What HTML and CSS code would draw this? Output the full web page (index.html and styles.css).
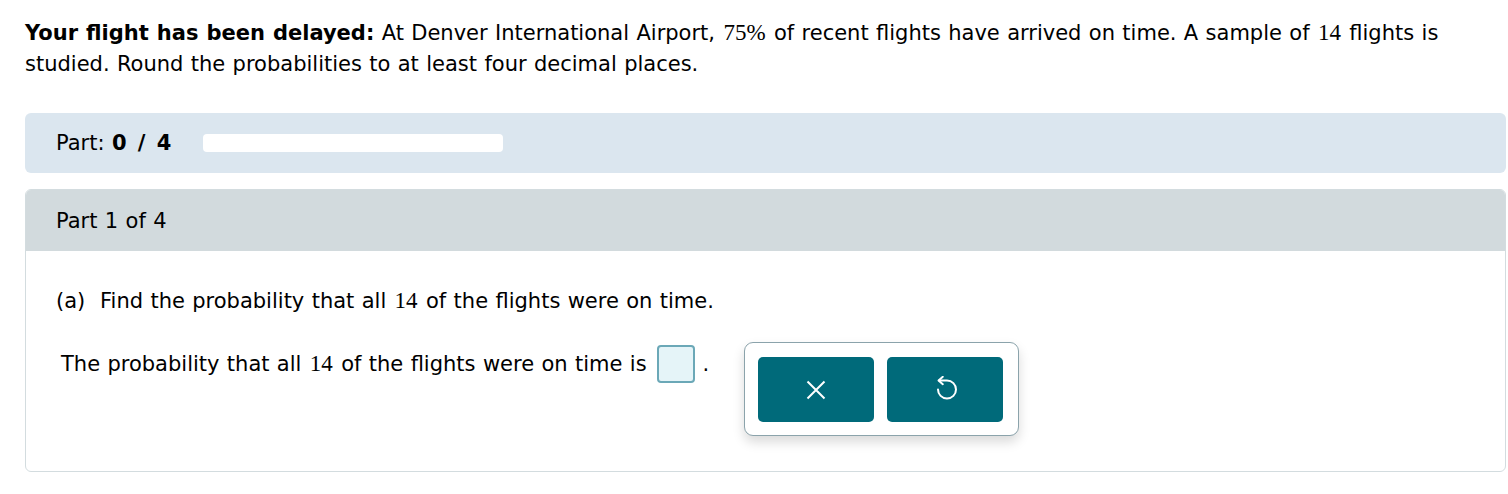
FILE: index.html
```html
<!DOCTYPE html>
<html>
<head>
<meta charset="utf-8">
<link rel="stylesheet" href="styles.css">
</head>
<body>
<div class="page">
  <p class="intro"><b>Your flight has been delayed:</b> At Denver International Airport, <span class="m">75%</span> of recent flights have arrived on time. A sample of <span class="m">14</span> flights is studied. Round the probabilities to at least four decimal places.</p>
  <div class="partbar">
    <span class="plabel">Part: <b class="score">0 / 4</b></span>
    <div class="progress"></div>
  </div>
  <div class="card">
    <div class="card-head">Part 1 of 4</div>
    <div class="card-body">
      <p class="q">(a)&nbsp; Find the probability that all <span class="m">14</span> of the flights were on time.</p>
      <div class="answer-row">
        <p class="ans"><span>The probability that all <span class="m">14</span> of the flights were on time is</span><span class="box"></span><span>.</span></p>
        <div class="tools">
          <button class="btn" aria-label="clear">
            <svg width="20" height="20" viewBox="0 0 20 20"><path d="M1.5 1.5 L18.5 18.5 M18.5 1.5 L1.5 18.5" stroke="#fff" stroke-width="2" fill="none"/></svg>
          </button>
          <button class="btn" aria-label="undo">
            <svg class="undo" width="26" height="26" viewBox="0 0 26 26"><path d="M5 13.5 A9 9 0 1 0 14 4.5 L6 4.5" stroke="#fff" stroke-width="2" fill="none" stroke-linecap="round"/><path d="M9.8 0.8 L5.6 4.5 L9.8 8.2" stroke="#fff" stroke-width="2" fill="none" stroke-linecap="round" stroke-linejoin="round"/></svg>
          </button>
        </div>
      </div>
    </div>
  </div>
</div>
</body>
</html>
```
FILE: styles.css
```css
html, body { margin: 0; padding: 0; background: #fff; }
body { font-family: "DejaVu Sans", Verdana, sans-serif; color: #000; font-size: 21px; word-spacing: 0.7px; }
.page { padding: 17px 2px 0 25px; }
.intro { margin: 0; line-height: 31px; }
.m { font-family: "Liberation Serif", "Times New Roman", serif; font-size: 23px; padding: 0 1px; }
.partbar { margin-top: 33px; height: 60px; background: #dbe6ef; border-radius: 6px; display: flex; align-items: center; padding-left: 31px; }
.plabel { width: 147px; }
.score { word-spacing: 3px; letter-spacing: 0.5px; }
.progress { width: 300px; height: 18px; background: #fff; border-radius: 4px; }
.card { margin-top: 16px; border: 1px solid #d3dcdf; border-radius: 6px; overflow: hidden; height: 283px; box-sizing: border-box; }
.card-head { background: #d2dadd; height: 61px; display: flex; align-items: center; padding-left: 30px; }
.card-body { padding: 35px 30px 0 30px; }
.q { margin: 0; line-height: 30px; }
.answer-row { display: flex; align-items: flex-start; margin-top: 36px; }
.ans { margin: -7px 0 0 5px; line-height: 30px; display: flex; align-items: center; white-space: pre; }
.box { display: inline-block; width: 34px; height: 34px; border: 2px solid #6ba8b7; border-radius: 4px; background: #e5f4f8; margin: 0 8px 0 10px; }
.tools { margin-left: 35px; margin-top: -10px; border: 1px solid #8ba3ab; border-radius: 9px; padding: 14px 15px 13px 13px; display: flex; gap: 13px; box-shadow: 0 6px 12px rgba(0,0,0,0.15); background: #fff; }
.btn { width: 116px; height: 65px; background: #006a7a; border: none; border-radius: 5px; display: flex; align-items: center; justify-content: center; padding: 0; }
.undo { margin-top: -2px; margin-left: 2px; }
```
